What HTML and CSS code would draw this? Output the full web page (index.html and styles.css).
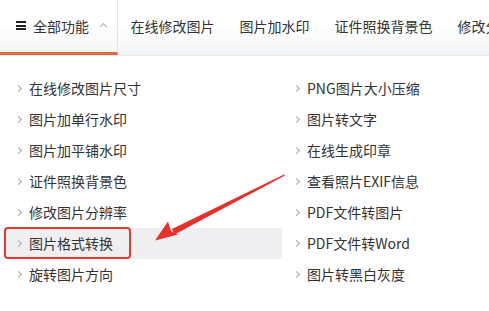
FILE: index.html
```html
<!DOCTYPE html>
<html lang="zh">
<head>
<meta charset="utf-8">
<link rel="stylesheet" href="styles.css">
</head>
<body>
<div class="page">
  <nav class="nav">
    <div class="tab tab-all">
      <span class="burger"><i></i><i></i><i></i></span>
      <span class="tab-label">全部功能</span>
      <svg class="caret" width="9" height="6" viewBox="0 0 9 6"><path d="M1 5 L4.5 1.5 L8 5" fill="none" stroke="#b8b8b8" stroke-width="1.1"/></svg>
    </div>
    <div class="tab">在线修改图片</div>
    <div class="tab">图片加水印</div>
    <div class="tab">证件照换背景色</div>
    <div class="tab">修改分辨率</div>
  </nav>
  <div class="menu">
    <ul class="col col-left">
      <li class="item">在线修改图片尺寸</li>
      <li class="item">图片加单行水印</li>
      <li class="item">图片加平铺水印</li>
      <li class="item">证件照换背景色</li>
      <li class="item">修改图片分辨率</li>
      <li class="item active">图片格式转换<span class="mark"></span></li>
      <li class="item">旋转图片方向</li>
    </ul>
    <ul class="col col-right">
      <li class="item">PNG图片大小压缩</li>
      <li class="item">图片转文字</li>
      <li class="item">在线生成印章</li>
      <li class="item">查看照片EXIF信息</li>
      <li class="item">PDF文件转图片</li>
      <li class="item">PDF文件转Word</li>
      <li class="item">图片转黑白灰度</li>
    </ul>
    <div class="ghost"></div>
    <svg class="arrow" width="489" height="311" viewBox="0 0 489 311">
      <path d="M284 174.5 L172 229 L174.5 234.5 L285 175.5 Z" fill="#e8302a"/>
      <path d="M155 240.5 L168 221.5 L171 231 L178 234.5 Z" fill="#e8302a"/>
    </svg>
  </div>
</div>
</body>
</html>
```
FILE: styles.css
```css
* { box-sizing: border-box; margin: 0; padding: 0; }
html, body { width: 489px; height: 311px; overflow: hidden; background: #fff; }
body {
  font-family: "Noto Sans CJK SC", "Noto Sans", sans-serif;
  font-size: 14px;
  color: #333;
}
.page { position: relative; width: 489px; height: 311px; }
.nav {
  display: flex;
  height: 56px;
  border-bottom: 1px solid #e6e7ea;
  background: linear-gradient(#ffffff 0%, #ffffff 45%, #f4f5f7 100%);
  white-space: nowrap;
  overflow: hidden;
}
.tab {
  display: flex;
  align-items: center;
  padding: 0 12.5px 4px;
  height: 55px;
  flex-shrink: 0;
  color: #333;
}
.tab-all {
  width: 118px;
  padding: 0 0 1px 16px;
  border-right: 1px solid #e4e5e8;
  border-bottom: 3px solid #e3693f;
}
.burger {
  display: flex;
  flex-direction: column;
  justify-content: space-between;
  width: 10px;
  height: 9px;
  margin-right: 7px;
}
.burger i { display: block; height: 2px; background: #222; }
.tab-label { margin-right: 10px; }
.caret { margin-top: -1px; }
.menu {
  position: relative;
  display: flex;
  padding: 17px 4px 0;
}
.col { list-style: none; }
.col-left { width: 278px; }
.col-right { flex: 1; }
.item {
  position: relative;
  height: 31px;
  line-height: 31px;
  padding-left: 25px;
  white-space: nowrap;
}
.item::before {
  content: "";
  position: absolute;
  left: 12px;
  top: 13px;
  width: 4px;
  height: 4px;
  border-top: 1px solid #a8a8a8;
  border-right: 1px solid #a8a8a8;
  transform: rotate(45deg);
}
.active { background: #efeff1; }
.mark {
  position: absolute;
  left: 0;
  top: -1px;
  width: 127px;
  height: 32px;
  border: 2px solid #e63a2e;
  border-radius: 4px;
}
.ghost {
  position: absolute;
  left: 195px;
  top: 41px;
  width: 95px;
  height: 33px;
  background: #fffdf4;
  z-index: -1;
}
.arrow { position: absolute; left: 0; top: -56px; pointer-events: none; }
```
